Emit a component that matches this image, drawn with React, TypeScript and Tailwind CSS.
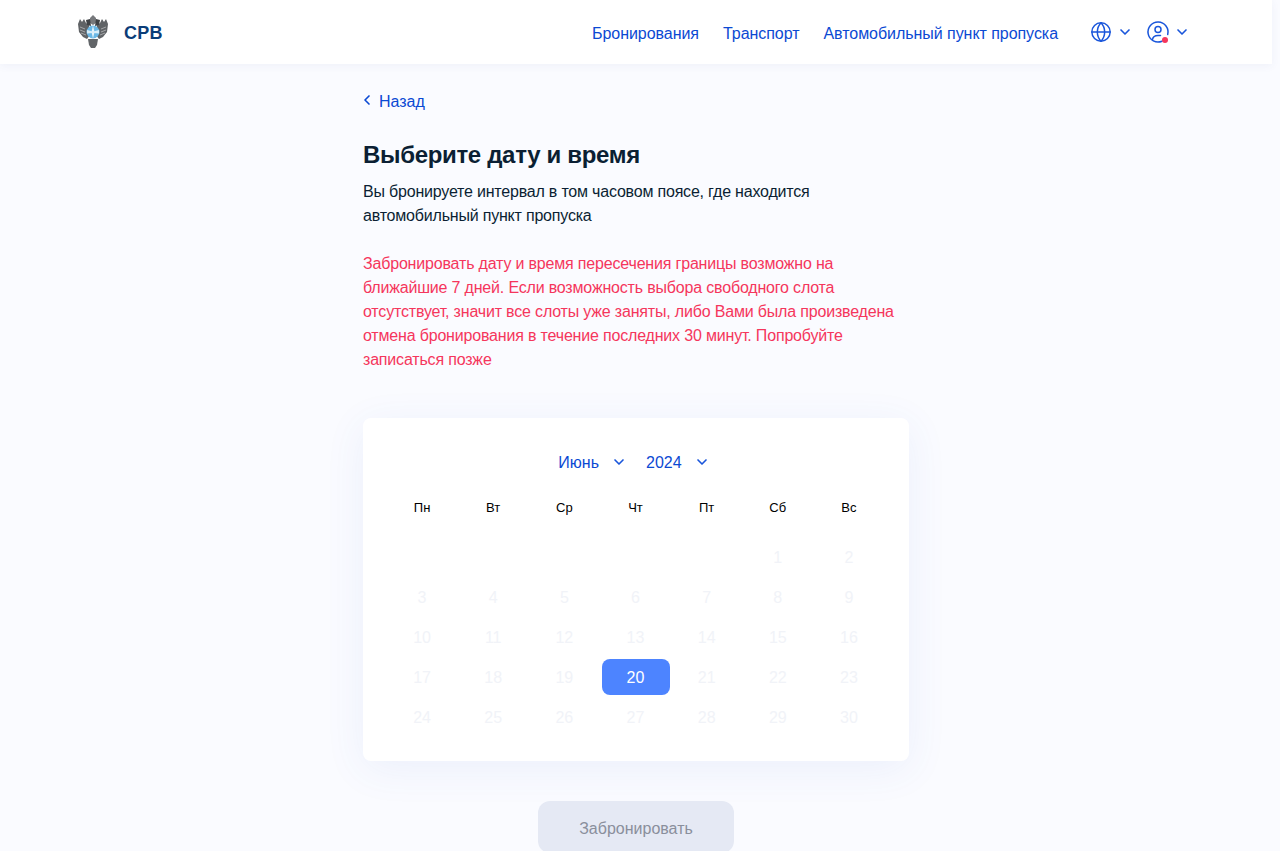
import React from "react";
import { ChevronDown, ChevronLeft, Globe } from "lucide-react";

const weekDays = ["Пн", "Вт", "Ср", "Чт", "Пт", "Сб", "Вс"];
const days: (number | null)[] = [null, null, null, null, null, ...Array.from({ length: 30 }, (_, i) => i + 1)];

function Logo() {
  return (
    <svg width="32" height="34" viewBox="0 0 32 34" aria-hidden="true">
      {/* wings */}
      <path d="M3 4 L5 7 L7 4 L9 8 L12 10 L13 20 L10 24 L6 22 L2 17 L1 9 Z" fill="#606366" />
      <path d="M29 4 L27 7 L25 4 L23 8 L20 10 L19 20 L22 24 L26 22 L30 17 L31 9 Z" fill="#606366" />
      <path d="M3 12 L8 14 M3 15 L8 17 M4 18 L9 20 M29 12 L24 14 M29 15 L24 17 M28 18 L23 20" stroke="#a5a7a9" strokeWidth="1" />
      {/* crown and heads */}
      <path d="M13 3 L16 0 L19 3 L19 8 L16 10 L13 8 Z" fill="#77797c" />
      <path d="M9 5 L13 4 L14 11 L10 10 Z" fill="#3f4245" />
      <path d="M23 5 L19 4 L18 11 L22 10 Z" fill="#3f4245" />
      {/* tail */}
      <path d="M11 24 L21 24 L20 30 L18 33 L14 33 L12 30 Z" fill="#626568" />
      {/* globe */}
      <circle cx="16" cy="17" r="6.5" fill="#6bb8e6" />
      <path d="M16 10.5 L17.5 17 L16 23.5 L14.5 17 Z" fill="#e6f3fa" />
      <path d="M10 15 L16 16.5 L22 15 L22 18.5 L16 18 L10 18.5 Z" fill="#d8edf8" />
    </svg>
  );
}

function UserIcon() {
  return (
    <span className="relative block w-6 h-6">
      <svg width="24" height="24" viewBox="0 0 24 24" fill="none" stroke="#1a56db" strokeWidth="1.5" strokeLinecap="round">
        <path d="M16 21.2 A10 10 0 1 1 21.7 14.5" />
        <circle cx="12" cy="9.5" r="3" />
        <path d="M6.5 19.5 C7 16.5 9 15.5 12 15.5 L14.5 15.5" />
      </svg>
      <span className="absolute right-[2px] bottom-[1px] w-[6px] h-[6px] rounded-full bg-[#f5365c]" />
    </span>
  );
}

export default function App() {
  return (
    <div className="h-[851px] overflow-hidden bg-[#fafbff] font-['Liberation_Sans',sans-serif]">
      {/* Header */}
      <header className="w-[1272px] h-16 bg-white shadow-[0_2px_8px_rgba(60,90,160,0.06)] flex items-center justify-between pl-[77px] pr-[82px]">
        <div className="flex items-center gap-[15px]">
          <Logo />
          <span className="mt-[2px] text-lg font-bold text-[#0b3d78] tracking-[0.2px]">СРВ</span>
        </div>
        <nav className="flex items-center text-[#0b49d3] text-base tracking-[-0.05px]">
          <a className="mt-[4px] mr-6">Бронирования</a>
          <a className="mt-[4px] mr-6">Транспорт</a>
          <a className="mt-[4px] mr-[32px]">Автомобильный пункт пропуска</a>
          <div className="flex items-center gap-[5px] mr-[13px]">
            <Globe size={22} strokeWidth={1.6} className="text-[#1a56db]" />
            <ChevronDown size={16} strokeWidth={2.5} className="text-[#1a56db]" />
          </div>
          <div className="flex items-center gap-1">
            <UserIcon />
            <ChevronDown size={16} strokeWidth={2.5} className="text-[#1a56db]" />
          </div>
        </nav>
      </header>

      {/* Content */}
      <main className="ml-[363px] w-[546px] pt-[25px]">
        <a className="flex items-center gap-[4px] h-6 text-[#0b49d3] text-base">
          <ChevronLeft size={16} strokeWidth={2.5} className="-ml-[4px] -mt-[2px]" />
          <span className="mt-[2px]">Назад</span>
        </a>
        <h1 className="mt-[26px] text-2xl leading-8 font-bold text-[#0b1f33] tracking-[-0.33px]">Выберите дату и время</h1>
        <p className="mt-[9px] w-[480px] text-base leading-6 text-[#0b1f33] tracking-[-0.2px]">
          Вы бронируете интервал в том часовом поясе, где находится автомобильный пункт пропуска
        </p>
        <p className="mt-6 w-[540px] text-base leading-6 text-[#f5365c] tracking-[-0.18px]">
          Забронировать дату и время пересечения границы возможно на ближайшие 7 дней. Если возможность выбора свободного слота отсутствует, значит все слоты уже заняты, либо Вами была произведена отмена бронирования в течение последних 30 минут. Попробуйте записаться позже
        </p>

        {/* Calendar */}
        <section className="mt-[46px] h-[343px] bg-white rounded-lg shadow-[0_8px_40px_rgba(60,100,200,0.08)] px-6 pt-8">
          <div className="flex items-center justify-center h-6 pr-1 text-[#0b49d3] text-base">
            <span className="mt-[2px]">Июнь</span>
            <ChevronDown size={16} strokeWidth={2.5} className="ml-[12px] mr-[19px] text-[#1a56db]" />
            <span className="mt-[2px]">2024</span>
            <ChevronDown size={16} strokeWidth={2.5} className="ml-[12px] text-[#1a56db]" />
          </div>
          <div className="grid grid-cols-7 mt-[24px] text-[13px] leading-5 text-black text-center">
            {weekDays.map((d) => (
              <div key={d} className="pr-[1px]">{d}</div>
            ))}
          </div>
          <div className="grid grid-cols-7 mt-[20px] text-center text-base">
            {days.map((d, i) =>
              d === 20 ? (
                <div key={i} className="h-10 pt-[1px] flex items-start justify-center">
                  <span className="w-[68px] h-9 pt-[1px] pr-[1px] rounded-lg bg-[#4d84ff] text-white flex items-center justify-center">{d}</span>
                </div>
              ) : (
                <div key={i} className="h-10 pr-[1px] flex items-center justify-center text-[#f1f3f8]">{d}</div>
              )
            )}
          </div>
        </section>

        <button className="block mx-auto mt-10 w-[196px] h-[52px] pt-[3px] rounded-xl bg-[#e5e9f4] text-[#8a8f9c] text-base">
          Забронировать
        </button>
      </main>
    </div>
  );
}
